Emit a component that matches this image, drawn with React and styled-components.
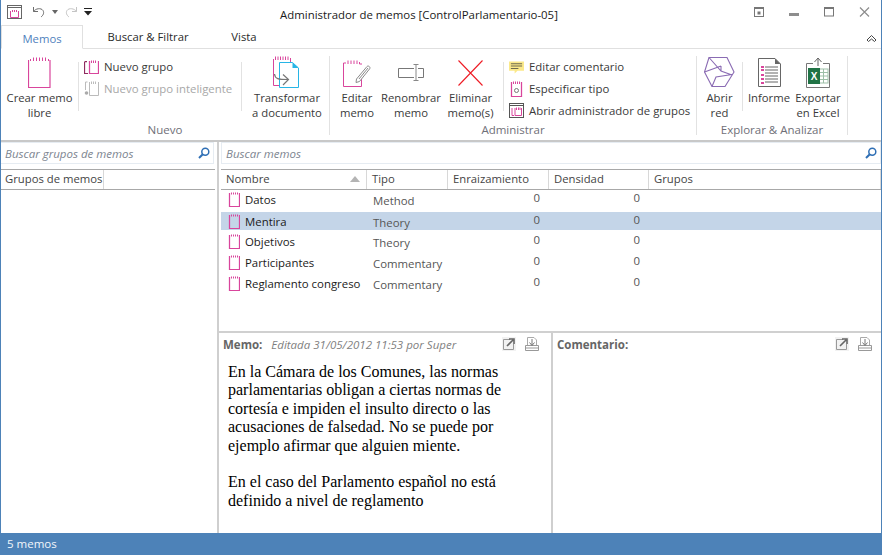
import React from 'react';
import styled, { createGlobalStyle } from 'styled-components';

const UI_FONT = '"Open Sans", "Noto Sans", sans-serif';
const BLUE = '#4d82b8';
const PINK = '#d9459c';

const GlobalStyle = createGlobalStyle`
  html, body { margin: 0; padding: 0; background: #fff; }
  body { font-family: ${UI_FONT}; font-size: 12px; color: #222; overflow: hidden; }
  * { box-sizing: border-box; }
`;

const Window = styled.div`
  width: 882px;
  height: 555px;
  display: flex;
  flex-direction: column;
  border-left: 1px solid ${BLUE};
  border-right: 1px solid ${BLUE};
  background: #fff;
`;

const TitleBar = styled.div`
  height: 24px;
  flex: none;
  display: grid;
  grid-template-columns: 160px 1fr 204px;
  align-items: center;
`;
const QuickAccess = styled.div`
  display: flex;
  align-items: center;
  padding-left: 5px;
  gap: 6px;
`;
const AppIconSlot = styled.div`
  display: flex;
  margin-right: 3px;
`;
const Title = styled.div`
  text-align: center;
  font-size: 11.4px;
  color: #1a1a1a;
  padding-top: 5px;
  white-space: nowrap;
`;
const WindowButtons = styled.div`
  display: flex;
  justify-content: flex-end;
  align-items: center;
  gap: 25px;
  padding-right: 11px;
`;

const TabRow = styled.div`
  height: 25px;
  flex: none;
  display: flex;
  align-items: flex-end;
  border-bottom: 1px solid #e0e0e0;
  position: relative;
`;
const Tab = styled.div`
  height: 24px;
  width: ${p => p.$w}px;
  text-align: center;
  line-height: 26px;
  font-size: 11.3px;
  color: ${p => (p.$active ? '#4f7fbd' : '#2a2a2a')};
  ${p => p.$active && `
    background: #fff;
    border: 1px solid #e0e0e0;
    border-bottom: 1px solid #fff;
    margin-bottom: -1px;
  `}
`;
const Collapse = styled.div`
  position: absolute;
  right: 4px;
  top: 5px;
`;

const Ribbon = styled.div`
  height: 93px;
  flex: none;
  display: flex;
  border-bottom: 2px solid #c8c8c8;
  padding-top: 7px;
`;
const Group = styled.div`
  width: ${p => p.$w}px;
  flex: none;
  display: flex;
  flex-direction: column;
  height: 79px;
  border-right: 1px solid #e2e2e2;
`;
const GroupBody = styled.div`
  flex: 1;
  display: flex;
  min-height: 0;
`;
const GroupLabel = styled.div`
  height: 16px;
  margin-bottom: -3px;
  line-height: 16px;
  text-align: center;
  font-size: 11.5px;
  color: #6f6f78;
  white-space: nowrap;
`;
const BigButton = styled.div`
  width: ${p => p.$w}px;
  flex: none;
  display: flex;
  flex-direction: column;
  align-items: center;
  text-align: center;
  color: #3a3a3a;
  font-size: 11.3px;
  line-height: 15px;
  white-space: nowrap;
`;
const BigIcon = styled.div`
  height: 34px;
  display: flex;
  align-items: flex-start;
  justify-content: center;
  padding-top: ${p => p.$pt ?? 0}px;
`;
const BigText = styled.span`
  padding-left: ${p => p.$pl ?? 0}px;
`;
const Divider = styled.div`
  width: 1px;
  height: 49px;
  margin-top: 6px;
  background: #e2e2e2;
  flex: none;
`;
const Spacer = styled.div`
  flex: 1;
`;
const SmallColumn = styled.div`
  display: flex;
  flex-direction: column;
  gap: 3px;
  padding: 1px 0 0 5px;
`;
const SmallButton = styled.div`
  height: 19px;
  display: flex;
  align-items: center;
  gap: 5px;
  font-size: 11.4px;
  white-space: nowrap;
  color: ${p => (p.$disabled ? '#a8a8a8' : '#3a3a3a')};
`;
const SmallIcon = styled.div`
  width: 15px;
  height: 16px;
  display: flex;
  align-items: center;
  justify-content: center;
  flex: none;
`;

const Main = styled.div`
  flex: 1;
  min-height: 0;
  display: flex;
`;
const LeftPane = styled.div`
  width: 218px;
  flex: none;
  border-right: 2px solid #cfcfcf;
  display: flex;
  flex-direction: column;
`;
const RightPane = styled.div`
  flex: 1;
  min-width: 0;
  display: flex;
  flex-direction: column;
`;
const SearchBox = styled.div`
  height: 22px;
  margin: 0 ${p => p.$mr ?? 0}px 0 ${p => p.$ml ?? 0}px;
  flex: none;
  display: flex;
  align-items: center;
  justify-content: space-between;
  padding: 0 3px 0 4px;
  border: 1px solid #e6ecf2;
  border-left: ${p => (p.$ml ? '1px solid #e6ecf2' : 'none')};
  font-style: italic;
  font-size: 11.5px;
  color: #7d8590;
`;
const HeaderRow = styled.div`
  height: 21px;
  margin: 5px ${p => p.$mr ?? 0}px 0 ${p => p.$ml ?? 0}px;
  flex: none;
  display: grid;
  grid-template-columns: ${p => p.$cols};
  border-top: 1px solid #a8a8a8;
  border-bottom: 1px solid #a8a8a8;
`;
const HeaderCell = styled.div`
  display: flex;
  align-items: center;
  justify-content: space-between;
  padding: 0 6px 2px ${p => p.$pl ?? 5}px;
  font-size: 11.3px;
  color: #444;
  border-right: 1px solid #d8d8d8;
  white-space: nowrap;
`;
const SortArrow = styled.div`
  width: 0;
  height: 0;
  border-left: 5px solid transparent;
  border-right: 5px solid transparent;
  border-bottom: 6px solid #b4b4b4;
`;

const TableArea = styled.div`
  height: 141px;
  flex: none;
  padding-left: 2px;
`;
const Row = styled.div`
  height: ${p => (p.$selected ? 18 : 21)}px;
  margin: ${p => (p.$selected ? '1px 0 2px' : 0)};
  display: grid;
  grid-template-columns: 146px 81px 101px 100px 1fr;
  align-items: center;
  background: ${p => (p.$selected ? '#c4d5e8' : 'transparent')};
  font-size: 11.4px;
`;
const NameCell = styled.div`
  display: flex;
  align-items: center;
  gap: 5px;
  padding: 0 0 3px 7px;
  color: #1a1a1a;
  white-space: nowrap;
`;
const TypeCell = styled.div`
  padding: 0 0 1px 6px;
  color: #555;
`;
const NumCell = styled.div`
  text-align: right;
  padding: 0 9px 6px 0;
  color: #555;
`;

const Bottom = styled.div`
  flex: 1;
  min-height: 0;
  display: grid;
  grid-template-columns: 334px 1fr;
  border-top: 2px solid #d0d0d0;
`;
const NotePane = styled.div`
  padding: 1px 0 0 4px;
  border-right: ${p => (p.$first ? '2px solid #cfcfcf' : 'none')};
  min-width: 0;
`;
const NoteHeader = styled.div`
  height: 20px;
  display: flex;
  align-items: center;
  gap: 9px;
  font-size: 11.5px;
  color: #5c5c5c;
  padding-right: ${p => p.$pr}px;
`;
const NoteLabel = styled.b`
  font-weight: 700;
  color: #666;
`;
const NoteMeta = styled.i`
  flex: 1;
  color: #7f7f7f;
`;
const NoteTools = styled.div`
  display: flex;
  gap: 9px;
  margin-left: auto;
`;
const NoteText = styled.div`
  font-family: "Liberation Serif", "Times New Roman", serif;
  font-size: 16px;
  line-height: 18.4px;
  color: #000;
  padding: 9px 0 0 5px;
  white-space: nowrap;
`;

const StatusBar = styled.div`
  height: 22px;
  flex: none;
  background: ${BLUE};
  color: #f2f6fb;
  font-size: 11.5px;
  line-height: 22px;
  padding-left: 7px;
  margin: 0 -1px;
`;

/* iconos */
const Memo = () => (
  <svg width="12" height="15" viewBox="0 0 12 15" fill="none">
    <path d="M1.5 1V14.5H11.5V1" stroke={PINK} strokeWidth="1.25" />
    <path d="M3.5 .5V2.5M5.5 .5V2.5M7.5 .5V2.5M9.5 .5V2.5" stroke={PINK} />
  </svg>
);
const BigMemo = () => (
  <svg width="23" height="31" viewBox="0 0 23 31" fill="none">
    <path d="M.5 3V30.5H22V3" strokeWidth="1.2" stroke={PINK} />
    <path d="M2.5 2V4M5.5 .5V4M8.5 .5V4M11.5 .5V4M14.5 .5V4M17.5 .5V4M20.5 2V4" stroke={PINK} />
  </svg>
);

const AppIcon = () => (
  <svg width="17" height="16" viewBox="0 0 17 16" fill="none">
    <rect x="1.5" y="1.5" width="14" height="13" stroke="#666" />
    <path d="M1.5 3.5H15.5" stroke="#666" />
    <path d="M4.5 7V13.5H12.5V7M6.5 6V8M8.5 6V8M10.5 6V8" stroke={PINK} />
  </svg>
);

const Undo = () => (
  <svg width="14" height="12" viewBox="0 0 14 12" fill="none">
    <path d="M1.5 1V5.5H6M1.5 5.5C3.5 2.5 9 1.5 11 4.5C12.5 7 11 9.5 9 11" stroke="#6d6d6d" />
  </svg>
);
const Redo = () => (
  <svg width="14" height="12" viewBox="0 0 14 12" fill="none">
    <path d="M12.5 1V5.5H8M12.5 5.5C10.5 2.5 5 1.5 3 4.5C1.5 7 3 9.5 5 11" stroke="#c4c4c4" />
  </svg>
);
const Caret = () => (
  <svg width="6" height="4" viewBox="0 0 6 4"><path d="M0 0H6L3 4Z" fill="#666" /></svg>
);
const QuickMenu = () => (
  <svg width="8" height="8" viewBox="0 0 8 8">
    <path d="M0 0H8V1H0Z M0 3H8L4 7.5Z" fill="#222" />
  </svg>
);

const WinHelp = () => (
  <svg width="10" height="10" viewBox="0 0 10 10" fill="none">
    <rect x=".5" y=".5" width="9" height="9" stroke="#777" />
    <path d="M1 1.5H9" stroke="#777" />
    <rect x="3.5" y="4.5" width="3" height="3" fill="#777" />
  </svg>
);
const WinMin = () => <svg width="10" height="10" viewBox="0 0 10 10"><rect y="6" width="10" height="3" fill="#8d8d8d" /></svg>;
const WinMax = () => (
  <svg width="10" height="10" viewBox="0 0 10 10" fill="none">
    <rect x=".5" y=".5" width="9" height="8.5" stroke="#777" />
    <rect x="0" y="0" width="10" height="2" fill="#777" />
  </svg>
);
const WinClose = () => (
  <svg width="11" height="10" viewBox="0 0 11 10" fill="none"><path d="M1 .5L10 9.5M10 .5L1 9.5" stroke="#8d8d8d" strokeWidth="1.2" /></svg>
);
const CollapseIcon = () => (
  <svg width="11" height="8" viewBox="0 0 11 8" fill="none">
    <path d="M1 6L5.5 1.5L10 6L8.5 7.5L5.5 5L2.5 7.5Z" stroke="#444" />
  </svg>
);

const SearchIcon = () => (
  <svg width="12" height="12" viewBox="0 0 12 12" fill="none">
    <circle cx="7.3" cy="4.7" r="3.5" stroke="#2f6fb5" strokeWidth="1.5" />
    <path d="M4.8 7.2L1 11" stroke="#2f6fb5" strokeWidth="2" />
  </svg>
);

const GroupIcon = () => (
  <svg width="15" height="14" viewBox="0 0 15 14" fill="none">
    <path d="M.5 2V13.5H4M.5 1.5H3" stroke="#8e2b5f" strokeWidth="1.25" />
    <path d="M5.5 1V13.5H14.5V1" stroke={PINK} strokeWidth="1.25" />
    <path d="M7.5 .5V3M9.5 .5V3M11.5 .5V3" stroke={PINK} />
  </svg>
);
const SmartGroupIcon = () => (
  <svg width="15" height="15" viewBox="0 0 15 15" fill="none">
    <path d="M1.5 1V9M1.5 1H3.5" stroke="#bbb" />
    <path d="M5.5 1V14.5H14.5V1" stroke="#bbb" />
    <path d="M7.5 .5V3M9.5 .5V3M11.5 .5V3" stroke="#bbb" />
    <circle cx="2.5" cy="12" r="1.8" fill="#aaa" />
  </svg>
);

const TransformIcon = () => (
  <svg width="26" height="33" viewBox="0 0 26 33" fill="none">
    <path d="M.5 3V29.5H6" stroke={PINK} />
    <path d="M2.5 .5V4M5 .5V4M7.5 .5V4M10 .5V4M12.5 .5V4M15 .5V4M17.5 2V6" stroke={PINK} />
    <path d="M6.5 6.5H19.5L25.5 12V31.5H6.5Z" fill="#fff" stroke="#27b5e6" />
    <path d="M19.5 6.5L25.5 12H19.5Z" fill="#27b5e6" />
    <path d="M1.5 18C2 23 5 23.5 15 23.5M10 18.5L15.5 23.5L10 29" stroke="#777" strokeWidth="1.2" />
  </svg>
);

const EditMemoIcon = () => (
  <svg width="28" height="27" viewBox="0 0 28 27" fill="none">
    <path d="M.5 3V26.5H18.5V17" stroke={PINK} />
    <path d="M.5 3H3M5 .5V4M8 .5V4M11 .5V4M14 .5V4M16.5 2V4H19" stroke={PINK} />
    <path d="M13.5 19L24 6.5C25.5 5 28 7.5 26.5 9L16.5 21.5L13 22.5Z" stroke="#8a8a8a" fill="#fff" />
    <path d="M16 19L25 8" stroke="#8a8a8a" />
  </svg>
);

const RenameIcon = () => (
  <svg width="26" height="17" viewBox="0 0 26 17" fill="none">
    <path d="M16 4.5H.5V13.5H16M20 4.5H25.5V13.5H20" stroke="#777" />
    <path d="M18 1V16M15.5 .5H20.5M15.5 16.5H20.5" stroke="#888" />
  </svg>
);

const DeleteIcon = () => (
  <svg width="25" height="26" viewBox="0 0 25 26" fill="none">
    <path d="M.5 .5L24.5 25.5M24.5 .5L.5 25.5" stroke="#ee1c25" strokeWidth="1.1" />
  </svg>
);

const CommentIcon = () => (
  <svg width="16" height="14" viewBox="0 0 16 14">
    <path d="M0 1H16V11H9L6 14V11H0Z" fill="#fbe98a" />
    <path d="M2 3H14V4H2ZM2 5.5H14V6.5H2ZM2 8H10V9H2Z" fill="#6e6a50" />
  </svg>
);
const TypeIcon = () => (
  <svg width="13" height="16" viewBox="0 0 13 16" fill="none">
    <path d="M1.5 1V15.5H11.5V1" stroke={PINK} strokeWidth="1.25" />
    <path d="M3.5 .5V3M5.5 .5V3M7.5 .5V3M9.5 .5V3" stroke={PINK} />
    <circle cx="6.5" cy="9.5" r="2" stroke="#777" />
  </svg>
);
const GroupManagerIcon = () => (
  <svg width="15" height="15" viewBox="0 0 15 15" fill="none">
    <rect x=".5" y=".5" width="14" height="14" stroke="#555" />
    <path d="M.5 2.5H14.5" stroke="#555" />
    <path d="M3 5V12.5H5M6 5V12.5H12.5V5M7.5 4.5V7M9.5 4.5V7M11 4.5V7" stroke={PINK} />
  </svg>
);

const NetworkIcon = () => (
  <svg width="31" height="30" viewBox="0 0 31 30" fill="none" stroke="#8a6bb3" strokeWidth="1.1">
    <path d="M5 .5H23L30 15L21 29.5H8L.5 15Z" />
    <path d="M5 .5L17 14L28 18M.5 15L17 9M8 29.5L12 20L28 17.5M17 9V14" />
  </svg>
);

const ReportIcon = () => (
  <svg width="23" height="29" viewBox="0 0 23 29" fill="none">
    <path d="M.5 .5H17L22.5 6V28.5H.5Z" fill="#fff" stroke="#666" />
    <path d="M17 .5L22.5 6H17Z" fill="#666" />
    <path d="M7 9H20M7 12H20M7 15H20M7 18H20M7 21H20M7 24H20" stroke="#666" />
    <path d="M3 8H6V10H3ZM3 11H6V13H3ZM3 16H6V18H3ZM3 20H6V22H3ZM3 24H6V26H3Z" fill={PINK} />
  </svg>
);

const ExcelIcon = () => (
  <svg width="26" height="31" viewBox="0 0 26 31">
    <path d="M13 1L9.5 5M13 1L16.5 5M13 1V9" stroke="#666" fill="none" />
    <path d="M8 6.5H1.5V30.5H24.5V6.5H18" stroke="#777" fill="none" />
    <rect x="14" y="12" width="9" height="14" fill="#fff" stroke="#9dbfa8" />
    <path d="M14 15.5H23M14 19H23M14 22.5H23M18.5 12V26" stroke="#9dbfa8" />
    <rect x="3" y="11" width="12" height="16" fill="#217346" />
    <text x="9" y="22.5" fontSize="10" fontWeight="700" fill="#fff" fontFamily="Liberation Sans, sans-serif" textAnchor="middle">X</text>
  </svg>
);

const PopSwatch = styled.svg`
  background: #f2f2f2;
`;
const PopOut = () => (
  <PopSwatch width="14" height="14" viewBox="0 0 14 14" fill="none">
    <path d="M8 2.5H1.5V12.5H11.5V7" stroke="#999" />
    <path d="M5 9L11 3M7 2H12V7" stroke="#666" strokeWidth="1.6" />
  </PopSwatch>
);
const SaveTo = () => (
  <svg width="14" height="14" viewBox="0 0 14 14" fill="none">
    <path d="M2.5 8V.5H9L11.5 3V8" stroke="#aaa" />
    <path d="M.5 8.5H13.5V13.5H.5ZM.5 11H13.5" stroke="#999" />
    <path d="M7 2V8M4.5 5.5L7 8.5L9.5 5.5" stroke="#777" />
  </svg>
);

const rows = [
  { name: 'Datos', type: 'Method' },
  { name: 'Mentira', type: 'Theory', selected: true },
  { name: 'Objetivos', type: 'Theory' },
  { name: 'Participantes', type: 'Commentary' },
  { name: 'Reglamento congreso', type: 'Commentary' },
];

const memoLines = [
  'En la Cámara de los Comunes, las normas',
  'parlamentarias obligan a ciertas normas de',
  'cortesía e impiden el insulto directo o las',
  'acusaciones de falsedad. No se puede por',
  'ejemplo afirmar que alguien miente.',
  '\u00a0',
  'En el caso del Parlamento español no está',
  'definido a nivel de reglamento',
];

const App = () => (
  <>
    <GlobalStyle />
    <Window>
      <TitleBar>
        <QuickAccess>
          <AppIconSlot><AppIcon /></AppIconSlot>
          <Undo />
          <Caret />
          <Redo />
          <QuickMenu />
        </QuickAccess>
        <Title>Administrador de memos [ControlParlamentario-05]</Title>
        <WindowButtons>
          <WinHelp />
          <WinMin />
          <WinMax />
          <WinClose />
        </WindowButtons>
      </TitleBar>

      <TabRow>
        <Tab $active $w={82}>Memos</Tab>
        <Tab $w={130}>Buscar &amp; Filtrar</Tab>
        <Tab $w={62}>Vista</Tab>
        <Collapse><CollapseIcon /></Collapse>
      </TabRow>

      <Ribbon>
        <Group $w={329}>
          <GroupBody>
            <BigButton $w={77}>
              <BigIcon $pt={1}><BigMemo /></BigIcon>
              <span>Crear memo<br />libre</span>
            </BigButton>
            <Divider />
            <SmallColumn>
              <SmallButton><SmallIcon><GroupIcon /></SmallIcon>Nuevo grupo</SmallButton>
              <SmallButton $disabled><SmallIcon><SmartGroupIcon /></SmallIcon>Nuevo grupo inteligente</SmallButton>
            </SmallColumn>
            <Spacer />
            <Divider />
            <BigButton $w={87}>
              <BigIcon><TransformIcon /></BigIcon>
              <BigText $pl={3}>Transformar<br />a documento</BigText>
            </BigButton>
          </GroupBody>
          <GroupLabel>Nuevo</GroupLabel>
        </Group>

        <Group $w={367}>
          <GroupBody>
            <BigButton $w={54}>
              <BigIcon $pt={4}><EditMemoIcon /></BigIcon>
              <span>Editar<br />memo</span>
            </BigButton>
            <BigButton $w={54}>
              <BigIcon $pt={8}><RenameIcon /></BigIcon>
              <span>Renombrar<br />memo</span>
            </BigButton>
            <BigButton $w={65}>
              <BigIcon $pt={4}><DeleteIcon /></BigIcon>
              <span>Eliminar<br />memo(s)</span>
            </BigButton>
            <Divider />
            <SmallColumn>
              <SmallButton><SmallIcon><CommentIcon /></SmallIcon>Editar comentario</SmallButton>
              <SmallButton><SmallIcon><TypeIcon /></SmallIcon>Especificar tipo</SmallButton>
              <SmallButton><SmallIcon><GroupManagerIcon /></SmallIcon>Abrir administrador de grupos</SmallButton>
            </SmallColumn>
          </GroupBody>
          <GroupLabel>Administrar</GroupLabel>
        </Group>

        <Group $w={151}>
          <GroupBody>
            <BigButton $w={45}>
              <BigIcon $pt={1}><NetworkIcon /></BigIcon>
              <span>Abrir<br />red</span>
            </BigButton>
            <Divider />
            <BigButton $w={52}>
              <BigIcon $pt={2}><ReportIcon /></BigIcon>
              <span>Informe</span>
            </BigButton>
            <BigButton $w={46}>
              <BigIcon $pt={1}><ExcelIcon /></BigIcon>
              <span>Exportar<br />en Excel</span>
            </BigButton>
          </GroupBody>
          <GroupLabel>Explorar &amp; Analizar</GroupLabel>
        </Group>
      </Ribbon>

      <Main>
        <LeftPane>
          <SearchBox $mr={3}>Buscar grupos de memos<SearchIcon /></SearchBox>
          <HeaderRow $cols="103px 1fr" $mr={2}>
            <HeaderCell $pl={4}>Grupos de memos</HeaderCell>
          </HeaderRow>
        </LeftPane>
        <RightPane>
          <SearchBox $ml={2}>Buscar memos<SearchIcon /></SearchBox>
          <HeaderRow $cols="146px 81px 101px 100px 1fr" $ml={2}>
            <HeaderCell>Nombre<SortArrow /></HeaderCell>
            <HeaderCell>Tipo</HeaderCell>
            <HeaderCell>Enraizamiento</HeaderCell>
            <HeaderCell>Densidad</HeaderCell>
            <HeaderCell>Grupos</HeaderCell>
          </HeaderRow>
          <TableArea>
            {rows.map(r => (
              <Row key={r.name} $selected={r.selected}>
                <NameCell><Memo />{r.name}</NameCell>
                <TypeCell>{r.type}</TypeCell>
                <NumCell>0</NumCell>
                <NumCell>0</NumCell>
                <div />
              </Row>
            ))}
          </TableArea>
          <Bottom>
            <NotePane $first>
              <NoteHeader $pr={12}>
                <NoteLabel>Memo:</NoteLabel>
                <NoteMeta>Editada 31/05/2012 11:53 por Super</NoteMeta>
                <NoteTools><PopOut /><SaveTo /></NoteTools>
              </NoteHeader>
              <NoteText>
                {memoLines.map((l, i) => <div key={i}>{l}</div>)}
              </NoteText>
            </NotePane>
            <NotePane>
              <NoteHeader $pr={9}>
                <NoteLabel>Comentario:</NoteLabel>
                <NoteTools><PopOut /><SaveTo /></NoteTools>
              </NoteHeader>
            </NotePane>
          </Bottom>
        </RightPane>
      </Main>

      <StatusBar>5 memos</StatusBar>
    </Window>
  </>
);

export default App;
